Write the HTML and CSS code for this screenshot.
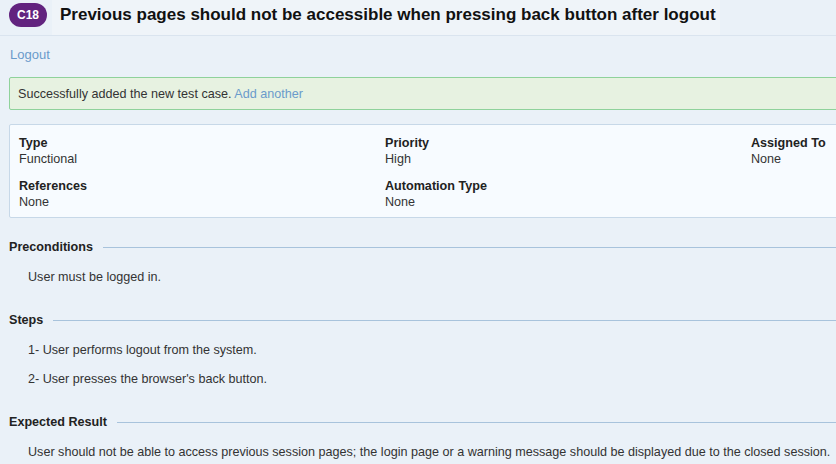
FILE: index.html
```html
<!DOCTYPE html>
<html>
<head>
<meta charset="utf-8">
<link rel="stylesheet" href="styles.css">
</head>
<body>
<div class="page">
  <header class="header">
    <span class="badge">C18</span>
    <h1 class="title">Previous pages should not be accessible when pressing back button after logout</h1>
  </header>
  <div class="content">
    <a class="logout" href="#">Logout</a>
    <div class="alert">Successfully added the new test case. <a href="#">Add another</a></div>
    <div class="card">
      <div class="field"><div class="label">Type</div><div class="value">Functional</div></div>
      <div class="field"><div class="label">Priority</div><div class="value">High</div></div>
      <div class="field"><div class="label">Assigned To</div><div class="value">None</div></div>
      <div class="field"><div class="label">References</div><div class="value">None</div></div>
      <div class="field"><div class="label">Automation Type</div><div class="value">None</div></div>
    </div>
    <section class="section">
      <h2 class="section-title"><span>Preconditions</span></h2>
      <p class="para">User must be logged in.</p>
    </section>
    <section class="section">
      <h2 class="section-title"><span>Steps</span></h2>
      <p class="para">1- User performs logout from the system.</p>
      <p class="para">2- User presses the browser's back button.</p>
    </section>
    <section class="section">
      <h2 class="section-title"><span>Expected Result</span></h2>
      <p class="para">User should not be able to access previous session pages; the login page or a warning message should be displayed due to the closed session.</p>
    </section>
  </div>
</div>
</body>
</html>
```
FILE: styles.css
```css
html, body {
  margin: 0;
  padding: 0;
  background: #eaf1f8;
  overflow: hidden;
}
body {
  font-family: "Liberation Sans", Arial, sans-serif;
  font-size: 12.6px;
  color: #333;
}
.page {
  width: 1130px;
}
.header {
  display: flex;
  align-items: center;
  height: 35px;
  border-bottom: 1px solid #dae4ef;
  padding-left: 9px;
}
.badge {
  display: inline-flex;
  align-items: center;
  justify-content: center;
  width: 38px;
  height: 24px;
  margin-top: -5px;
  border-radius: 12px;
  background: #62237f;
  color: #fff;
  font-weight: bold;
  font-size: 12px;
}
.title {
  margin: 0 0 0 5px;
  padding: 0 4px 0 8px;
  height: 35px;
  line-height: 30px;
  font-size: 17px;
  font-weight: bold;
  color: #111;
  background: #eff4f9;
}
.content {
  padding: 0 9px;
}
.logout {
  display: block;
  margin-top: 11px;
  margin-left: 1px;
  line-height: 16px;
  font-size: 13px;
  color: #6a9bcb;
  text-decoration: none;
}
.alert {
  margin-top: 14px;
  height: 31px;
  line-height: 32px;
  padding-left: 8px;
  border: 1px solid #8fd29b;
  border-radius: 2px;
  background: #e7f2e1;
  color: #333;
}
.alert a {
  color: #6a9bcb;
  text-decoration: none;
}
.card {
  margin-top: 14px;
  display: grid;
  grid-template-columns: 366px 366px 366px;
  row-gap: 11px;
  padding: 10px 9px 7px;
  background: #f7fbff;
  border: 1px solid #c7d8e8;
  border-radius: 2px;
}
.label {
  font-weight: bold;
  color: #222;
  line-height: 16px;
}
.value {
  line-height: 16px;
  color: #333;
}
.section {
  margin-top: 21px;
}
.section + .section {
  margin-top: 27px;
}
.section-title {
  display: flex;
  align-items: center;
  margin: 0;
  font-size: 12.6px;
  font-weight: bold;
  color: #222;
  line-height: 16px;
}
.section-title::after {
  content: "";
  flex: 1;
  height: 1px;
  background: #a8c3dc;
  margin-left: 10px;
}
.para {
  margin: 14px 0 0 19px;
  line-height: 16px;
}
.para + .para {
  margin-top: 13px;
}
```
